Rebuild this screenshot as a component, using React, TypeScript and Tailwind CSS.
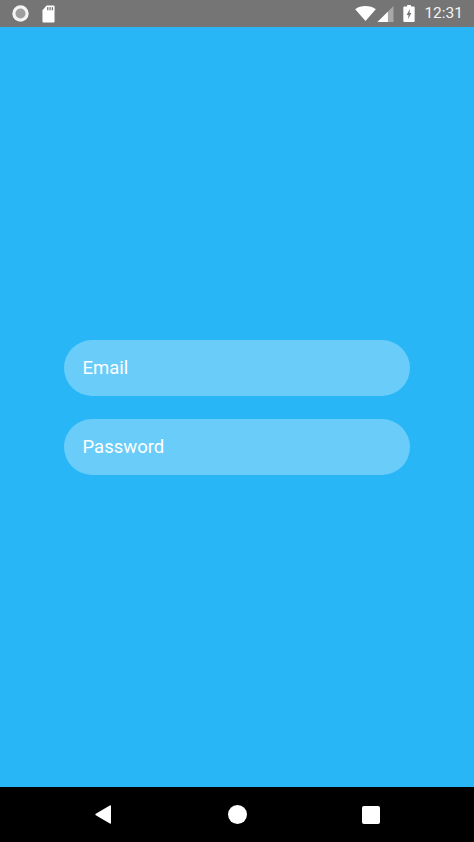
import React from 'react';

const StatusBar = () => (
  <div className="flex h-[27px] shrink-0 items-center justify-between bg-[#757575] pl-[12px] pr-[11px]">
    <div className="flex items-center gap-[13px]">
      <svg width="17" height="17" viewBox="0 0 17 17">
        <circle cx="8.5" cy="8.5" r="8.2" fill="#f4f4f4" />
        <circle cx="8.5" cy="8.5" r="5" fill="#9e9e9e" />
      </svg>
      <svg width="13" height="18" viewBox="0 0 14 17" preserveAspectRatio="none">
        <path d="M5 0.5H12.5a1 1 0 0 1 1 1V15.5a1 1 0 0 1-1 1H1.5a1 1 0 0 1-1-1V5z" fill="#fff" />
        <rect x="5.5" y="2" width="1.4" height="3" fill="#757575" />
        <rect x="8" y="2" width="1.4" height="3" fill="#757575" />
        <rect x="10.5" y="2" width="1.4" height="3" fill="#757575" />
      </svg>
    </div>
    <div className="flex items-center">
      <svg width="21" height="15" viewBox="0 0 22 16" className="mr-[1px]">
        <path d="M0 3.5C3 1.2 6.8 0 11 0s8 1.2 11 3.5L11 16z" fill="#fff" />
      </svg>
      <svg width="17" height="16" viewBox="0 0 17 17">
        <path d="M0 17L17 0V17z" fill="#a8a8a8" />
        <path d="M0 17L11 6V17z" fill="#fff" />
      </svg>
      <svg width="12" height="17" viewBox="0 0 12 18" className="ml-[9px]">
        <path d="M4 0H8V1.5H11a1 1 0 0 1 1 1V17a1 1 0 0 1-1 1H1a1 1 0 0 1-1-1V2.5a1 1 0 0 1 1-1H4z" fill="#fff" />
        <path d="M7 4L3.5 10.5H5.5L5 15L8.5 8.5H6.5z" fill="#757575" />
      </svg>
      <span className="ml-[9px] font-['Roboto',sans-serif] text-[15.5px] leading-none text-[#f4f4f4]">
        12:31
      </span>
    </div>
  </div>
);

const NavBar = () => (
  <div className="grid h-[55px] shrink-0 grid-cols-[133.5px_133.5px_133.5px] items-center bg-black pl-[37px]">
    <div className="flex justify-center">
      <svg width="17" height="19" viewBox="0 0 17 19">
        <path d="M16 1V18a.8.8 0 0 1-1.2.6L.8 10.2a.8.8 0 0 1 0-1.4L14.8.4A.8.8 0 0 1 16 1z" fill="#fff" />
      </svg>
    </div>
    <div className="flex justify-center">
      <div className="h-[19px] w-[19px] rounded-full bg-white" />
    </div>
    <div className="flex justify-center">
      <div className="h-[18px] w-[18px] rounded-[2px] bg-white" />
    </div>
  </div>
);

const Field = ({ placeholder, type }: { placeholder: string; type: string }) => (
  <input
    type={type}
    placeholder={placeholder}
    className="h-[56px] w-full rounded-[28px] bg-[#69ccf9] px-[18.5px] font-['Roboto',sans-serif] text-[18.5px] text-white outline-none placeholder:text-white"
  />
);

export default function App() {
  return (
    <div className="flex h-[842px] w-[474px] flex-col overflow-hidden bg-[#29b6f6]">
      <StatusBar />
      <div className="flex flex-1 flex-col justify-center gap-[23px] px-[64px]">
        <Field type="email" placeholder="Email" />
        <Field type="password" placeholder="Password" />
      </div>
      <NavBar />
    </div>
  );
}
